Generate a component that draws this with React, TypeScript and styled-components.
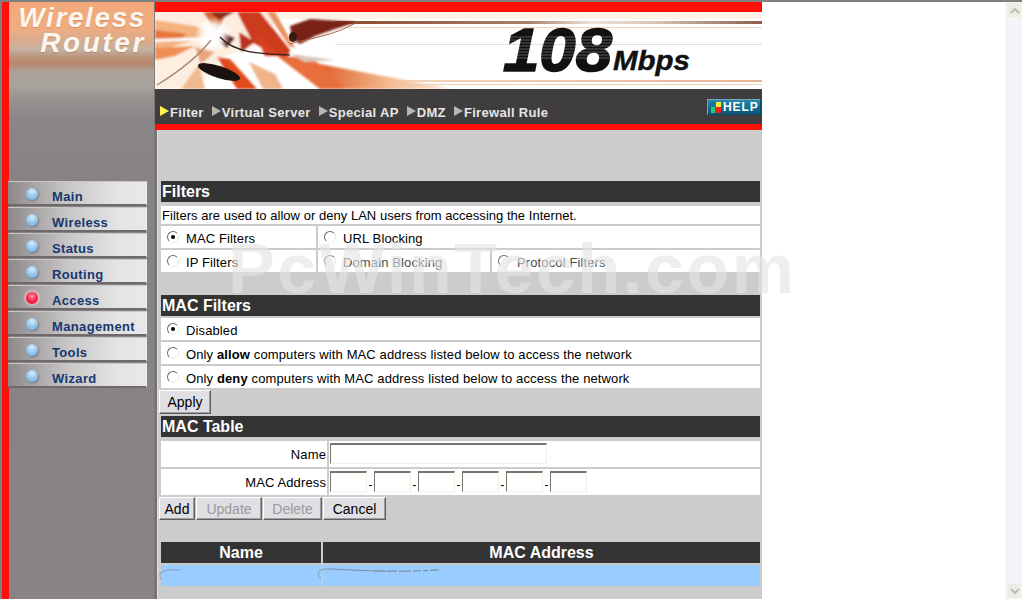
import React from 'react';
import styled, { createGlobalStyle } from 'styled-components';

const Global = createGlobalStyle`
  html, body { margin: 0; padding: 0; height: 100%; overflow: hidden; background: #fff; }
  #root { height: 100%; }
`;

const Shell = styled.div`
  position: relative; display: flex; height: 599px; width: 1022px; overflow: hidden;
  font-family: "Liberation Sans", Arial, sans-serif; border-top: 2px solid #808080; box-sizing: border-box; background: #fff;
`;
const Frame = styled.div`
  display: flex; width: 762px; flex: none; border-left: 2px solid #808080; box-sizing: border-box;
`;
const RedBar = styled.div`width: 7px; flex: none; background: #ff0f07;`;
const Side = styled.aside`
  width: 145px; flex: none; display: flex; flex-direction: column;
  background: linear-gradient(180deg, #f4a978 0, #f1ad80 24px, #dcab8c 38px, #c3b1a1 48px, #bb9078 56px, #b8866c 62px, #ad9f92 68px, #a9a59d 76px, #a6a29c 84px, #96908e 98px, #8b8688 118px, #878384 178px, #888485 100%);
`;
const Logo = styled.div`
  height: 176px; flex: none; box-sizing: border-box; padding: 3px 8px 0 0; text-align: right;
  color: #fbf7f0; font: italic bold 28px/25px "Liberation Sans", Arial, sans-serif;
  text-shadow: 0 1px 1px rgba(150,90,50,.35);
`;
const LogoLine = styled.div<{ $track: number }>`letter-spacing: ${p => p.$track}px;`;
const Nav = styled.nav`display: flex; flex-direction: column; gap: 1px; margin-top: 3px;`;
const NavItem = styled.a`
  display: flex; align-items: center; box-sizing: border-box; height: 25px; width: 139px; margin-left: -1px; padding: 7px 0 0 18px;
  background: linear-gradient(90deg, #8c8889 0, #a09c9d 18px, #c8c6c7 60px, #e4e4e4 110px, #e8e8e8 100%);
  border-top: 1px solid #c9c7c7; border-right: 1px solid #f0f0f0; border-bottom: 2px solid #6e6a6b;
  color: #17376f; font-weight: bold; font-size: 13px; letter-spacing: .35px;
`;
const Dot = styled.span<{ $on?: boolean }>`
  width: 12px; height: 12px; border-radius: 50%; flex: none; margin: -5px 14px 0 0;
  background: ${p => p.$on
    ? 'radial-gradient(circle at 50% 35%, #ff9fb0 0, #fb2a55 45%, #e00f3a 100%)'
    : 'radial-gradient(circle at 50% 30%, #d8ecfa 0, #8fc3ec 55%, #6ea9de 100%)'};
  box-shadow: ${p => p.$on ? '0 0 3px 1px #ffd0d8' : '1px 1px 2px rgba(70,70,70,.5)'};
`;
const Divider = styled.div`
  width: 4px; flex: none; background: linear-gradient(90deg, #807c7d 0, #6f6c6d 3px, #e4e4e4 3px, #e4e4e4 100%);
`;
const Main = styled.main`
  position: relative; flex: 1; display: flex; flex-direction: column; background: #ccc; min-width: 0;
`;
const Head = styled.header`flex: none; display: flex; flex-direction: column; margin-left: -3px;`;
const RedStrip = styled.div<{ $h: number }>`height: ${p => p.$h}px; background: #ff0f07; flex: none;`;
const Banner = styled.div`height: 77px; flex: none; line-height: 0; background: #fff;`;
const Tabs = styled.div`
  height: 35px; flex: none; box-sizing: border-box; background: #3f3d3e; display: flex; align-items: flex-end; justify-content: space-between;
  padding: 0 1px 3px 5px;
`;
const TabList = styled.div`display: flex;`;
const Tab = styled.a<{ $gap: number }>`
  display: flex; align-items: flex-start; margin-right: ${p => p.$gap}px; color: #e6e6e6;
  font-size: 13px; font-weight: bold; letter-spacing: .33px; line-height: 16px;
`;
const Arrow = styled.span<{ $on?: boolean }>`
  width: 0; height: 0; flex: none; margin: 1px 1px 0 0;
  border-left: 9px solid ${p => p.$on ? '#fff24d' : '#b9b6b6'};
  border-top: 5px solid transparent; border-bottom: 5px solid transparent;
`;
const Help = styled.a`
  width: 54px; height: 16px; margin-bottom: 6px; display: flex; align-items: center; gap: 2px; box-sizing: border-box; padding-left: 3px;
  background: linear-gradient(180deg, #2c86a8 0, #106a8e 60%, #0b5474 100%); border: 1px solid #6fa9be; border-right-color: #0d4a63; border-bottom-color: #0d4a63;
  color: #fff; font: bold 12px/1 "Liberation Sans", Arial, sans-serif; letter-spacing: .9px;
`;
const HelpIcon = styled.svg`width: 10px; height: 11px; flex: none;`;
const Body = styled.div`padding: 51px 2px 0 3px; display: flex; flex-direction: column;`;
const Title = styled.h2<{ $mb?: number; $mt?: number }>`
  margin: ${p => p.$mt ?? 0}px 0 ${p => p.$mb ?? 2}px; height: 21px; background: #333; color: #fff;
  font: bold 16px/22px "Liberation Sans", Arial, sans-serif; padding-left: 1px;
`;
const Rows = styled.div<{ $cols?: string; $mt?: number }>`
  display: grid; grid-template-columns: ${p => p.$cols ?? '1fr'}; gap: 2px; margin-top: ${p => p.$mt ?? 0}px;
`;
const Cell = styled.div<{ $h?: number; $right?: boolean; $muted?: boolean }>`
  background: #fff; height: ${p => p.$h ?? 22}px; display: flex; align-items: center; box-sizing: border-box;
  font-size: 13px; letter-spacing: .12px; color: ${p => p.$muted ? '#4a4a4a' : '#000'};
  ${p => p.$right ? 'justify-content: flex-end; padding-right: 1px;' : 'padding-left: 1px;'}
`;
const Intro = styled(Cell)`letter-spacing: .03px;`;
const RadioCell = styled(Cell)`padding-top: 2px;`;
const Radio = styled.span<{ $on?: boolean }>`
  position: relative; width: 12px; height: 12px; flex: none; border-radius: 50%; box-sizing: border-box; margin: -2px 7px 0 5px;
  border: 1px solid; border-color: #6b6b65 #e8e6dc #f1efe2 #6b6b65; background: #fff;
  &::after { content: ''; position: absolute; left: 3px; top: 3px; width: 4px; height: 4px; border-radius: 50%; background: ${p => p.$on ? '#000' : 'transparent'}; }
`;
const Lower = styled.div`display: flex; gap: 1px; margin: 2px 0 2px -2px;`;
const Btn = styled.button<{ $w: number; $h: number }>`
  width: ${p => p.$w}px; height: ${p => p.$h}px; padding: 0; background: #e0dfe3; color: #000; font: 14px "Liberation Sans", Arial, sans-serif;
  border: 1px solid; border-color: #fff #5f5f5f #5f5f5f #fff; box-shadow: inset -1px -1px 0 #9d9d9d;
  &:disabled { color: #9a9a9a; }
`;
const TextInput = styled.input<{ $w: number }>`
  width: ${p => p.$w}px; height: 21px; box-sizing: border-box; padding: 0; margin: -1px 0 0; background: #fff; outline: none;
  border-style: solid; border-color: #77766c #f1efe2 #f1efe2 #77766c; border-width: 2px 1px 1px 1px;
`;
const MacLine = styled.div`display: flex; align-items: center;`;
const Dash = styled.span`width: 7px; font-size: 12px; text-align: center; margin-top: 5px;`;
const HeadRow = styled.div`display: grid; grid-template-columns: 160px 437px; gap: 2px; margin-top: 20px;`;
const HeadCell = styled.div`
  height: 21px; background: #333; color: #fff; text-align: center; font: bold 16px/21px "Liberation Sans", Arial, sans-serif;
`;
const DataRow = styled.div`
  display: grid; grid-template-columns: 160px 437px; gap: 2px; margin: 2px 0 0; background: #aed0ec;
`;
const DataCell = styled.div`height: 21px; background: #99ccff; line-height: 0;`;
const Smear = styled.svg`display: block; width: 100%; height: 21px; overflow: visible;`;
const Mark = styled.div`
  position: absolute; left: 228px; top: 232px; white-space: nowrap; pointer-events: none;
  font: bold 70px/1 "Liberation Sans", Arial, sans-serif; letter-spacing: 2.6px; color: rgba(228,228,228,.62);
`;
const Scroll = styled.div`
  position: absolute; right: 0; top: 0; bottom: 0; width: 16px; background: #f4f4fb; border-left: 1px solid #ecebe4; box-sizing: border-box;
  display: flex; flex-direction: column; justify-content: space-between;
`;
const ScrollBtn = styled.div`
  height: 16px; background: #eeede5; border: 1px solid #f6f5ef; display: flex; align-items: center; justify-content: center; box-sizing: border-box;
`;
const Chevron = styled.svg`width: 10px; height: 7px;`;

const nav = ['Main', 'Wireless', 'Status', 'Routing', 'Access', 'Management', 'Tools', 'Wizard'];
const tabs = ['Filter', 'Virtual Server', 'Special AP', 'DMZ', 'Firewall Rule'];

function BannerArt() {
  return (
    <svg width="607" height="77" viewBox="0 0 607 77">
      <defs>
        <linearGradient id="band" x1="0" x2="1"><stop offset="0" stopColor="#8c4a2a" /><stop offset=".45" stopColor="#a97f69" /><stop offset=".6" stopColor="#efe3d8" /><stop offset=".75" stopColor="#d8c4b4" /><stop offset="1" stopColor="#8a5f49" /></linearGradient>
        <linearGradient id="low" x1="0" x2="1"><stop offset="0" stopColor="#e0612a" /><stop offset=".5" stopColor="#f3b98e" /><stop offset="1" stopColor="#fbe9da" /></linearGradient>
        <linearGradient id="line" x1="0" x2="1"><stop offset="0" stopColor="#f5d6bb" /><stop offset="1" stopColor="#e7b595" /></linearGradient>
        <radialGradient id="burst"><stop offset="0" stopColor="#fff" /><stop offset=".55" stopColor="#fff" stopOpacity=".9" /><stop offset="1" stopColor="#fff" stopOpacity="0" /></radialGradient>
        <filter id="soft"><feGaussianBlur stdDeviation=".8" /></filter>
      </defs>
      <rect width="607" height="77" fill="#fff" />
      <rect y="0" width="607" height="7" fill="#fdf3e6" />
      <rect x="180" y="9" width="427" height="3" fill="url(#band)" />
      <rect x="190" y="15" width="417" height="1" fill="#f0d7c2" />
      <rect x="180" y="32" width="427" height="1" fill="#e6dce0" />
      <rect x="240" y="68" width="367" height="2" fill="url(#line)" />
      <rect x="240" y="72" width="367" height="1" fill="#f1cfae" />
      <g filter="url(#soft)">
        <polygon points="0,0 125,0 110,30 70,44 40,77 0,77" fill="#fdeee0" />
        <polygon points="0,8 40,14 60,22 0,40" fill="#f4b280" />
        <polygon points="0,18 32,22 22,30 0,30" fill="#e8743a" />
        <polygon points="0,36 40,34 20,44 0,48" fill="#ef8e52" />
        <polygon points="48,0 72,0 62,20" fill="#d5632f" />
        <polygon points="55,0 80,0 64,8" fill="#8e2d15" />
        <polygon points="82,0 105,0 135,38 132,48 98,31" fill="#cb3a1a" />
        <polygon points="112,0 120,0 140,36 134,34" fill="#e9905e" />
        <polygon points="66,20 80,26 72,36 64,30" fill="#5b2016" />
        <polygon points="84,20 100,30 86,40" fill="#b9301a" />
        <polygon points="135,14 155,7 202,10 180,17 160,24 145,32 137,26" fill="#7a2414" />
        <polygon points="62,45 75,47 102,77 82,77" fill="#e24a1c" />
        <polygon points="40,35 60,40 46,52" fill="#e8a47c" />
        <polygon points="94,50 120,62 128,77 108,77" fill="#f0b48c" />
        <polygon points="122,44 155,46 205,77 165,77" fill="#e96f3c" />
        <polygon points="165,52 260,70 300,77 190,77" fill="url(#low)" />
        <polygon points="135,42 165,46 180,48 150,50" fill="#d8c8bc" />
        <polygon points="100,20 125,44 110,44" fill="#d9431c" />
        <polygon points="26,77 44,52 50,77" fill="#f2b98e" />
        <circle cx="58" cy="23" r="18" fill="url(#burst)" />
        <polygon points="0,27 58,25 58,28 0,30" fill="#ffffff" />
      </g>
      <ellipse cx="138" cy="25" rx="4" ry="5" fill="#3c1a14" />
      <ellipse cx="64" cy="60" rx="22" ry="6" transform="rotate(18 64 60)" fill="#1c1310" />
      <path d="M65 25 C 80 42, 110 42, 135 43" fill="none" stroke="#2a1f1c" strokeWidth="1.2" />
      <path d="M135 32 C 150 27, 180 24, 202 10" fill="none" stroke="#a9684a" strokeWidth="1" />
      <path d="M2 73 C 20 62, 42 46, 56 28" fill="none" stroke="#a38a7a" strokeWidth="1.4" />
      <g fontFamily="'Liberation Sans', Arial, sans-serif" fontWeight="bold" fontStyle="italic" fill="#111" stroke="#111">
        <text x="348" y="59" fontSize="61" strokeWidth="1.6" textLength="109" lengthAdjust="spacingAndGlyphs">108</text>
        <text x="458" y="58" fontSize="27" strokeWidth=".4" textLength="77" lengthAdjust="spacingAndGlyphs">Mbps</text>
      </g>
      <g stroke="#fff" strokeWidth=".6" opacity=".5">
        {[25, 28, 31, 34, 37, 40, 43, 46].map(y => <line key={y} x1="345" y1={y} x2="460" y2={y} />)}
      </g>
    </svg>
  );
}

export default function App() {
  return (
    <Shell>
      <Global />
      <Frame>
        <RedBar />
        <Side>
          <Logo>
            <LogoLine $track={1.6}>Wireless</LogoLine>
            <LogoLine $track={2.6}>Router</LogoLine>
          </Logo>
          <Nav>
            {nav.map(n => (
              <NavItem key={n}><Dot $on={n === 'Access'} />{n}</NavItem>
            ))}
          </Nav>
        </Side>
        <Divider />
        <Main>
          <Head>
            <RedStrip $h={10} />
            <Banner><BannerArt /></Banner>
            <Tabs>
              <TabList>
                {tabs.map((t, i) => (
                  <Tab key={t} $gap={8}><Arrow $on={i === 0} />{t}</Tab>
                ))}
              </TabList>
              <Help>
                <HelpIcon viewBox="0 0 10 11">
                  <rect width="10" height="11" fill="#d8e8ee" />
                  <rect x="0" y="0" width="5" height="5" fill="#17a" />
                  <rect x="5" y="0" width="5" height="5" fill="#ee3" />
                  <rect x="0" y="5" width="5" height="6" fill="#2c6" />
                  <rect x="4" y="5" width="6" height="6" fill="#e22" />
                </HelpIcon>
                HELP
              </Help>
            </Tabs>
            <RedStrip $h={6} />
          </Head>
          <Body>
            <Title $mb={4}>Filters</Title>
            <Rows>
              <Intro $h={18}>Filters are used to allow or deny LAN users from accessing the Internet.</Intro>
            </Rows>
            <Rows $cols="155px 442px" $mt={2}>
              <RadioCell><Radio $on />MAC Filters</RadioCell>
              <RadioCell><Radio />URL Blocking</RadioCell>
            </Rows>
            <Rows $cols="155px 172px 268px" $mt={2}>
              <RadioCell><Radio />IP Filters</RadioCell>
              <RadioCell $muted><Radio />Domain Blocking</RadioCell>
              <RadioCell $muted><Radio />Protocol Filters</RadioCell>
            </Rows>
            <Title $mt={23}>MAC Filters</Title>
            <Rows>
              <RadioCell><Radio $on />Disabled</RadioCell>
              <RadioCell><Radio />Only&nbsp;<b>allow</b>&nbsp;computers with MAC address listed below to access the network</RadioCell>
              <RadioCell><Radio />Only&nbsp;<b>deny</b>&nbsp;computers with MAC address listed below to access the network</RadioCell>
            </Rows>
            <Lower><Btn $w={52} $h={24}>Apply</Btn></Lower>
            <Title $mb={4}>MAC Table</Title>
            <Rows $cols="166px 431px">
              <Cell $h={26} $right>Name</Cell>
              <Cell $h={26}><TextInput $w={217} /></Cell>
              <Cell $h={26} $right>MAC Address</Cell>
              <Cell $h={26}>
                <MacLine>
                  {[0, 1, 2, 3, 4, 5].map(i => (
                    <React.Fragment key={i}>
                      {i > 0 && <Dash>-</Dash>}
                      <TextInput $w={37} />
                    </React.Fragment>
                  ))}
                </MacLine>
              </Cell>
            </Rows>
            <Lower>
              <Btn $w={36} $h={23}>Add</Btn>
              <Btn $w={66} $h={23} disabled>Update</Btn>
              <Btn $w={59} $h={23} disabled>Delete</Btn>
              <Btn $w={63} $h={23}>Cancel</Btn>
            </Lower>
            <HeadRow>
              <HeadCell>Name</HeadCell>
              <HeadCell>MAC Address</HeadCell>
            </HeadRow>
            <DataRow>
              <DataCell>
                <Smear viewBox="0 0 160 21">
                  <path d="M20 5 C 10 4, 3 5, 0 8 C -2 10, -1 13, 1 15" fill="none" stroke="#8aa3bd" strokeWidth="1.2" />
                </Smear>
              </DataCell>
              <DataCell>
                <Smear viewBox="0 0 437 21">
                  <path d="M8 4 C -6 3, -7 10, -2 13" fill="none" stroke="#8398ad" strokeWidth="1" />
                  <path d="M8 4 C 40 6, 80 7, 116 5" fill="none" stroke="#7d8c9c" strokeWidth="1.2" strokeDasharray="40 1 14 1 10 2 12 2 8 2 5 2" />
                </Smear>
              </DataCell>
            </DataRow>
          </Body>
        </Main>
      </Frame>
      <Mark>PcWinTech.com</Mark>
      <Scroll>
        <ScrollBtn><Chevron viewBox="0 0 10 7"><path d="M1 6 L5 2 L9 6" fill="none" stroke="#bdbcb0" strokeWidth="2" /></Chevron></ScrollBtn>
        <ScrollBtn><Chevron viewBox="0 0 10 7"><path d="M1 1 L5 5 L9 1" fill="none" stroke="#bdbcb0" strokeWidth="2" /></Chevron></ScrollBtn>
      </Scroll>
    </Shell>
  );
}
